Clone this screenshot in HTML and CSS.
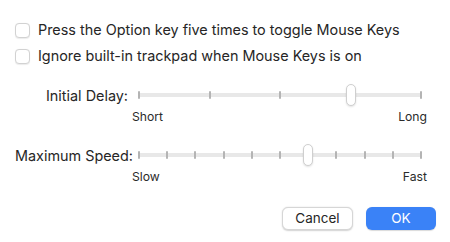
FILE: index.html
```html
<!DOCTYPE html>
<html>
<head>
<meta charset="utf-8">
<link rel="stylesheet" href="styles.css">
</head>
<body>
<div class="dialog">
  <div class="checks">
    <label class="check"><span class="box"></span><span class="check-text">Press the Option key five times to toggle Mouse Keys</span></label>
    <label class="check"><span class="box"></span><span class="check-text">Ignore built-in trackpad when Mouse Keys is on</span></label>
  </div>
  <div class="slider-group first">
    <div class="slider-row">
      <div class="slider-label">Initial Delay:</div>
      <div class="slider">
        <div class="track">
          <span class="tick"></span><span class="tick"></span><span class="tick"></span><span class="tick"></span><span class="tick"></span>
        </div>
        <div class="knob" style="left: 75%"></div>
      </div>
    </div>
    <div class="ends"><span>Short</span><span>Long</span></div>
  </div>
  <div class="slider-group second">
    <div class="slider-row">
      <div class="slider-label">Maximum Speed:</div>
      <div class="slider">
        <div class="track">
          <span class="tick"></span><span class="tick"></span><span class="tick"></span><span class="tick"></span><span class="tick"></span><span class="tick"></span><span class="tick"></span><span class="tick"></span><span class="tick"></span><span class="tick"></span><span class="tick"></span>
        </div>
        <div class="knob" style="left: 60%"></div>
      </div>
    </div>
    <div class="ends"><span>Slow</span><span>Fast</span></div>
  </div>
  <div class="buttons">
    <button class="btn cancel">Cancel</button>
    <button class="btn ok">OK</button>
  </div>
</div>
</body>
</html>
```
FILE: styles.css
```css
html, body {
  margin: 0;
  padding: 0;
  background: #ffffff;
}
body {
  font-family: "Inter", "Liberation Sans", sans-serif;
  font-size: 14.4px;
  color: #262626;
  width: 450px;
  height: 242px;
  overflow: hidden;
}
.dialog {
  padding: 20px 14px 0 15px;
}
.checks {
  display: flex;
  flex-direction: column;
  gap: 6px;
}
.check {
  display: flex;
  align-items: center;
  gap: 8px;
  height: 20px;
}
.box {
  width: 13px;
  height: 13px;
  border: 1px solid #d2d2d2;
  border-radius: 4px;
  background: #fff;
  box-shadow: 0 0.5px 1px rgba(0,0,0,0.08);
  flex: none;
}
.check-text {
  line-height: 20px;
  white-space: nowrap;
}
.slider-group.first {
  margin-top: 17px;
}
.slider-group.second {
  margin-top: 18px;
}
.slider-row {
  display: grid;
  grid-template-columns: 113px 284px;
  column-gap: 10px;
  align-items: center;
  height: 24px;
}
.slider-label {
  text-align: right;
  white-space: nowrap;
}
.slider {
  position: relative;
  height: 24px;
  display: flex;
  align-items: center;
}
.track {
  flex: 1;
  height: 4px;
  background: #e8e8e8;
  border-radius: 2px;
  display: flex;
  justify-content: space-between;
  align-items: center;
}
.tick {
  width: 2px;
  height: 8px;
  background: #b4b4b4;
  border-radius: 1px;
}
.knob {
  position: absolute;
  top: 1px;
  width: 8px;
  height: 20px;
  margin-left: -5px;
  background: #ffffff;
  border: 1px solid #cfcfcf;
  border-radius: 5px;
  box-shadow: 0 1px 2px rgba(0,0,0,0.12);
}
.ends {
  display: flex;
  justify-content: space-between;
  margin: 2px 9px 0 117px;
  font-size: 12.2px;
  line-height: 16px;
  color: #2b2b2b;
}
.buttons {
  display: flex;
  justify-content: flex-end;
  gap: 13px;
  margin-top: 22px;
}
.btn {
  font-family: "Inter", "Liberation Sans", sans-serif;
  font-size: 13.5px;
  height: 23px;
  width: 70px;
  border-radius: 6px;
  padding: 0;
  line-height: 21px;
}
.cancel {
  width: 71px;
  background: #ffffff;
  color: #262626;
  border: 0.5px solid #d6d6d6;
  box-shadow: 0 0.5px 1.5px rgba(0,0,0,0.18);
}
.ok {
  background: #3a82f7;
  color: #ffffff;
  border: none;
  box-shadow: 0 0.5px 1px rgba(0,0,0,0.15);
}
```
